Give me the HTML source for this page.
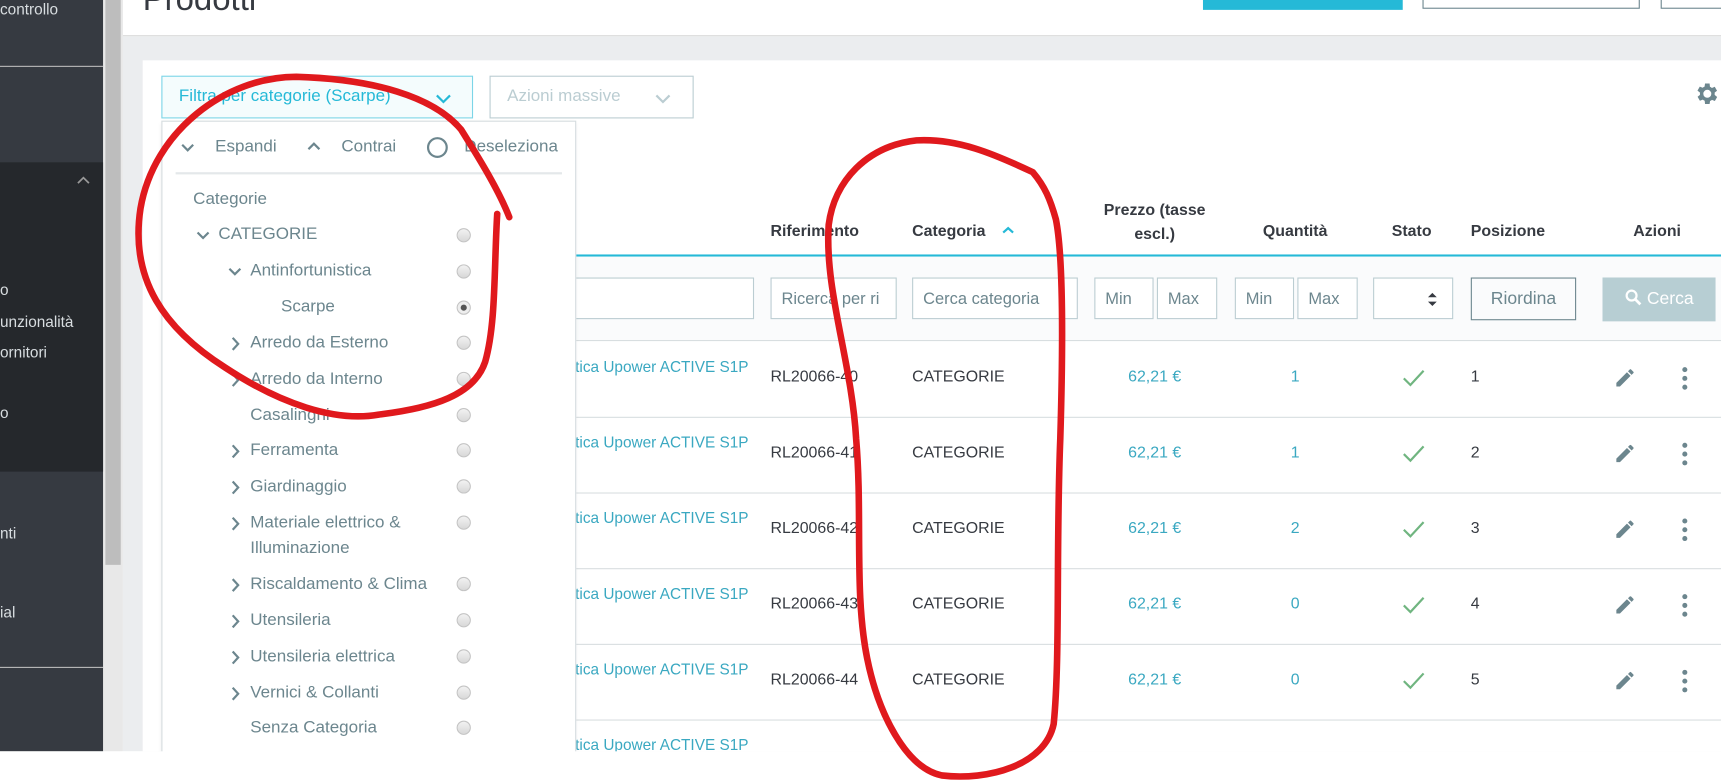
<!DOCTYPE html>
<html><head><meta charset="utf-8"><style>
html,body{margin:0;padding:0;width:1721px;height:782px;overflow:hidden;background:#fff}
#w{position:absolute;left:0;top:0;width:1568px;height:713px;transform:scale(1.0976,1.0968);transform-origin:0 0;font-family:"Liberation Sans",sans-serif;font-size:14.5px;color:#363a41}
.a{position:absolute;white-space:nowrap}
.t{color:#3aa8c1}
.inp{position:absolute;height:38px;border:1px solid #bbcdd2;background:#fff;box-sizing:border-box;color:#6c868e;padding:10px 9px;font-size:15px;white-space:nowrap;overflow:hidden}
.rad{position:absolute;left:416px;width:13px;height:13px;border-radius:50%;border:1px solid #c4c4c4;background:linear-gradient(#f2f2f2,#d8d8d8);box-sizing:border-box}
.tr{position:absolute;color:#6c868e;font-size:15.5px;white-space:nowrap}
.hr{position:absolute;left:524px;width:1044px;height:1px;background:#d8dee0}
.h{position:absolute;font-weight:bold;font-size:14.5px;color:#363a41;white-space:nowrap}
</style></head><body><div id="w">
<div class="a" style="left:0;top:0;width:94px;height:685px;background:#363a41"></div>
<div class="a" style="left:0;top:60px;width:94px;height:1px;background:#bbb"></div>
<div class="a" style="left:0;top:148px;width:94px;height:282px;background:#25282c"></div>
<div class="a" style="left:0;top:608px;width:94px;height:1px;background:#bbb"></div>
<div class="a" style="left:0;top:0;color:#d8dde0;font-size:14px">controllo</div>
<svg class="a" style="left:70px;top:160px" width="12" height="8"><path d="M1 7 L6 2 L11 7" stroke="#999" stroke-width="1.6" fill="none"/></svg>
<div class="a" style="left:0;top:256px;color:#d8dde0;font-size:14px">o</div>
<div class="a" style="left:0;top:285px;color:#d8dde0;font-size:14px">unzionalità</div>
<div class="a" style="left:0;top:313px;color:#d8dde0;font-size:14px">ornitori</div>
<div class="a" style="left:0;top:368px;color:#d8dde0;font-size:14px">o</div>
<div class="a" style="left:0;top:478px;color:#d8dde0;font-size:14px">nti</div>
<div class="a" style="left:0;top:550px;color:#d8dde0;font-size:14px">ial</div>
<div class="a" style="left:94px;top:0;width:18px;height:685px;background:#e8e8e8"></div>
<div class="a" style="left:96px;top:0;width:14px;height:515px;background:#bdbdbd"></div>
<div class="a" style="left:112px;top:33px;width:1456px;height:652px;background:#ebedef"></div>
<div class="a" style="left:112px;top:32px;width:1456px;height:1px;background:#dcdcdc"></div>
<div class="a" style="left:130px;top:-17px;font-size:30px;color:#363a41">Prodotti</div>
<div class="a" style="left:1096px;top:0;width:182px;height:9px;background:#25b9d7"></div>
<div class="a" style="left:1296px;top:-2px;width:198px;height:10px;border:1px solid #6c868e;box-sizing:border-box"></div>
<div class="a" style="left:1513px;top:-2px;width:60px;height:10px;border:1px solid #6c868e;box-sizing:border-box"></div>
<div class="a" style="left:130px;top:55px;width:1438px;height:630px;background:#fff"></div>
<div class="a" style="left:147px;top:69px;width:284px;height:39px;border:1px solid #7cd5e7;background:#f4fcfd;box-sizing:border-box"></div>
<div class="a" style="left:163px;top:79px;font-size:15.5px;color:#25b9d7">Filtra per categorie (Scarpe)</div>
<svg class="a" style="left:397px;top:85px" width="14" height="10"><path d="M1 2 L7 8 L13 2" stroke="#25b9d7" stroke-width="2" fill="none"/></svg>
<div class="a" style="left:446px;top:69px;width:186px;height:39px;border:1px solid #bbcdd2;box-sizing:border-box"></div>
<div class="a" style="left:462px;top:79px;font-size:15.5px;color:#bbcdd2">Azioni massive</div>
<svg class="a" style="left:597px;top:85px" width="14" height="10"><path d="M1 2 L7 8 L13 2" stroke="#bbcdd2" stroke-width="2" fill="none"/></svg>
<svg class="a" style="left:1543px;top:73px" width="25" height="25" viewBox="0 0 24 24"><path fill="#6c868e" d="M19.4 13a7.5 7.5 0 000-2l2.1-1.6-2-3.5-2.5 1a7 7 0 00-1.7-1L15 3h-4l-.4 2.7a7 7 0 00-1.7 1l-2.5-1-2 3.5L6.6 11a7.5 7.5 0 000 2l-2.1 1.6 2 3.5 2.5-1a7 7 0 001.7 1L11 21h4l.4-2.7a7 7 0 001.7-1l2.5 1 2-3.5zM13 15.5a3.5 3.5 0 110-7 3.5 3.5 0 010 7z" transform="translate(-1 0)"/></svg>
<div class="h" style="left:702px;top:203px">Riferimento</div>
<div class="h" style="left:831px;top:203px">Categoria</div>
<svg class="a" style="left:913px;top:206px" width="11" height="8"><path d="M1 6 L5.5 2 L10 6" stroke="#25b9d7" stroke-width="2" fill="none"/></svg>
<div class="h" style="left:1002px;top:181px;width:100px;text-align:center;line-height:22px">Prezzo (tasse<br>escl.)</div>
<div class="h" style="left:1140px;top:203px;width:80px;text-align:center">Quantità</div>
<div class="h" style="left:1268px;top:203px">Stato</div>
<div class="h" style="left:1340px;top:203px">Posizione</div>
<div class="h" style="left:1488px;top:203px">Azioni</div>
<div class="a" style="left:524px;top:232px;width:1044px;height:2px;background:#25b9d7"></div>
<div class="a" style="left:524px;top:234px;width:1044px;height:76px;background:#fafbfc"></div>
<div class="inp" style="left:500px;top:253px;width:187px"></div>
<div class="inp" style="left:702px;top:253px;width:115px">Ricerca per ri</div>
<div class="inp" style="left:831px;top:253px;width:151px">Cerca categoria</div>
<div class="inp" style="left:997px;top:253px;width:54px">Min</div>
<div class="inp" style="left:1054px;top:253px;width:55px">Max</div>
<div class="inp" style="left:1125px;top:253px;width:54px">Min</div>
<div class="inp" style="left:1182px;top:253px;width:55px">Max</div>
<div class="inp" style="left:1251px;top:253px;width:73px"></div>
<svg class="a" style="left:1300px;top:266px" width="10" height="14"><path d="M1 5 L5 1 L9 5Z M1 9 L5 13 L9 9Z" fill="#363a41"/></svg>
<div class="a" style="left:1340px;top:253px;width:96px;height:39px;border:1px solid #6c868e;box-sizing:border-box;text-align:center;line-height:37px;font-size:16px;color:#6c868e">Riordina</div>
<div class="a" style="left:1460px;top:253px;width:103px;height:40px;background:#b7ced3;color:#fff;text-align:center;line-height:40px;font-size:16px"><svg width="16" height="16" style="vertical-align:-2px"><circle cx="6.5" cy="6.5" r="4.5" stroke="#fff" stroke-width="2" fill="none"/><path d="M10 10 L14.5 14.5" stroke="#fff" stroke-width="2.5"/></svg> Cerca</div>
<div class="hr" style="top:310px"></div>
<div class="hr" style="top:380px"></div>
<div class="hr" style="top:449px"></div>
<div class="hr" style="top:518px"></div>
<div class="hr" style="top:587px"></div>
<div class="hr" style="top:656px"></div>
<div id="rows"></div>
<div class="a" style="left:147px;top:110px;width:378px;height:590px;background:#fff;border:1px solid #d5dcdf;box-sizing:border-box;box-shadow:0 2px 4px rgba(0,0,0,.08)"></div>
<div class="a" style="left:0;top:685px;width:1568px;height:28px;background:#fff"></div>
<svg class="a" style="left:165px;top:130px" width="12" height="9"><path d="M1 2 L6 7 L11 2" stroke="#6c868e" stroke-width="2" fill="none"/></svg>
<div class="tr" style="left:196px;top:125px">Espandi</div>
<svg class="a" style="left:280px;top:129px" width="12" height="9"><path d="M1 7 L6 2 L11 7" stroke="#6c868e" stroke-width="2" fill="none"/></svg>
<div class="tr" style="left:311px;top:125px">Contrai</div>
<div class="a" style="left:389px;top:125px;width:19px;height:19px;border:2px solid #6c868e;border-radius:50%;box-sizing:border-box"></div>
<div class="tr" style="left:423px;top:125px">Deseleziona</div>
<div class="a" style="left:160px;top:157px;width:352px;height:2px;background:#e4e8ea"></div>
<div class="tr" style="left:176px;top:173px">Categorie</div>
<svg class="a" style="left:179px;top:210px" width="12" height="9"><path d="M1 2 L6 7 L11 2" stroke="#6c868e" stroke-width="2" fill="none"/></svg>
<div class="tr" style="left:199px;top:205px">CATEGORIE</div><div class="rad" style="top:208px"></div>
<svg class="a" style="left:208px;top:243px" width="12" height="9"><path d="M1 2 L6 7 L11 2" stroke="#6c868e" stroke-width="2" fill="none"/></svg>
<div class="tr" style="left:228px;top:238px">Antinfortunistica</div><div class="rad" style="top:241px"></div>
<div class="tr" style="left:256px;top:271px">Scarpe</div><div class="rad" style="top:274px;background:radial-gradient(#555 0 2.5px,#eee 3px)"></div>
<div id="tree"></div>
<svg class="a" style="left:0;top:0" width="1568" height="713"><g stroke="#e0191d" stroke-width="6" fill="none" stroke-linecap="round">
<path d="M464 198 C455 175 440 150 420 118 C395 88 340 72 270 70 C205 70 140 120 128 190 C118 255 150 300 205 335 C255 368 305 385 345 378 C395 372 432 360 442 330 C452 295 450 245 453 195"/>
<path d="M941 157 C905 140 872 126 835 128 C790 133 760 165 755 205 C751 265 776 330 780 400 C786 470 778 540 790 600 C800 650 825 700 858 707 C900 712 952 698 960 660 C966 600 962 500 966 400 C969 300 968 230 962 200 C957 182 952 170 941 157"/></g></svg>
</div>
<script>
var r='',ys=[345,414,483,552,621],q=['1','1','2','0','0'];
for(var i=0;i<5;i++){var y=ys[i];
r+='<div class="a t" style="left:524px;top:'+(y-19)+'px;font-size:14px">tica Upower ACTIVE S1P</div>'+
'<div class="a" style="left:702px;top:'+(y-9)+'px">RL20066-'+(40+i)+'</div>'+
'<div class="a" style="left:831px;top:'+(y-9)+'px">CATEGORIE</div>'+
'<div class="a t" style="left:1002px;top:'+(y-9)+'px;width:100px;text-align:center">62,21 €</div>'+
'<div class="a t" style="left:1140px;top:'+(y-9)+'px;width:80px;text-align:center">'+q[i]+'</div>'+
'<svg class="a" style="left:1277px;top:'+(y-9)+'px" width="22" height="18"><path d="M2 9 L8 15 L20 2" stroke="#70b580" stroke-width="2" fill="none"/></svg>'+
'<div class="a" style="left:1340px;top:'+(y-9)+'px">'+(i+1)+'</div>'+
'<svg class="a" style="left:1470px;top:'+(y-11)+'px" width="21" height="21" viewBox="0 0 24 24"><path fill="#6c868e" d="M3 17.25V21h3.75L17.8 9.94l-3.75-3.75L3 17.25zM20.7 7.04a1 1 0 000-1.41l-2.34-2.34a1 1 0 00-1.41 0l-1.83 1.83 3.75 3.75 1.83-1.83z"/></svg>'+
'<svg class="a" style="left:1531px;top:'+(y-11)+'px" width="8" height="22"><circle cx="4" cy="3" r="2.3" fill="#6c868e"/><circle cx="4" cy="11" r="2.3" fill="#6c868e"/><circle cx="4" cy="19" r="2.3" fill="#6c868e"/></svg>';}
r+='<div class="a t" style="left:524px;top:671px;font-size:14px">tica Upower ACTIVE S1P</div>';
document.getElementById('rows').innerHTML=r;
var t=[['Arredo da Esterno',313,1],['Arredo da Interno',346,1],['Casalinghi',379,0],['Ferramenta',411,1],['Giardinaggio',444,1],['Materiale elettrico &amp;<br>Illuminazione',477,1],['Riscaldamento &amp; Clima',533,1],['Utensileria',566,1],['Utensileria elettrica',599,1],['Vernici &amp; Collanti',632,1],['Senza Categoria',664,0]],s='';
t.forEach(function(e){var y=e[1];
if(e[2])s+='<svg class="a" style="left:210px;top:'+(y-6)+'px" width="9" height="13"><path d="M2 1 L7 6.5 L2 12" stroke="#6c868e" stroke-width="2" fill="none"/></svg>';
s+='<div class="tr" style="left:228px;top:'+(y-9)+'px;line-height:23px;margin-top:-3px">'+e[0]+'</div><div class="rad" style="top:'+(y-7)+'px"></div>';});
document.getElementById('tree').innerHTML=s;
</script>
</body></html>
